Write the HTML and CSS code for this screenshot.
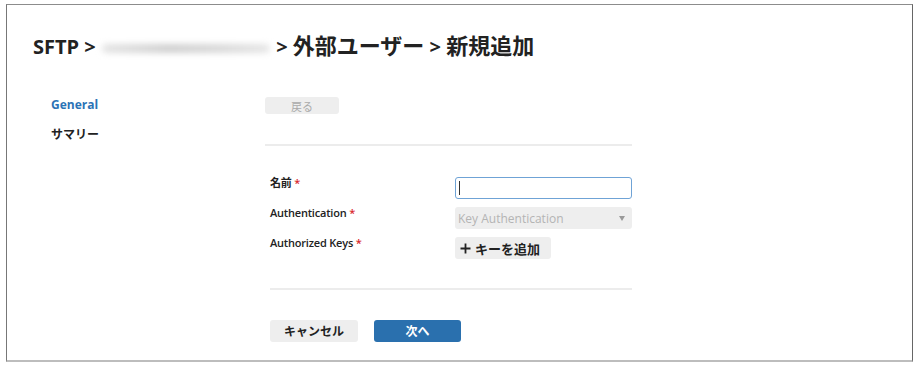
FILE: index.html
```html
<!DOCTYPE html>
<html lang="ja">
<head>
    <meta charset="UTF-8">
    <title>SFTP - 外部ユーザー - 新規追加</title>
    <link rel="stylesheet" href="styles.css">
</head>
<body>
    <div class="frame">
        <h1 class="page-title">SFTP &gt; <span class="blurred"></span> &gt; <span class="jp">外部ユーザー</span> &gt; <span class="jp">新規追加</span></h1>

        <div class="layout">
            <ul class="side-nav">
                <li class="nav-item active">General</li>
                <li class="nav-item">サマリー</li>
            </ul>

            <div class="main">
                <button class="btn btn-back" disabled>戻る</button>
                <div class="divider"></div>

                <div class="form">
                    <div class="form-row">
                        <label class="form-label">名前 <span class="req">*</span></label>
                        <div class="text-input"><span class="caret"></span></div>
                    </div>
                    <div class="form-row">
                        <label class="form-label">Authentication <span class="req">*</span></label>
                        <div class="select-input">
                            <span>Key Authentication</span>
                            <span class="arrow"></span>
                        </div>
                    </div>
                    <div class="form-row">
                        <label class="form-label">Authorized Keys <span class="req">*</span></label>
                        <div>
                            <button class="btn btn-add">
                                <svg width="11" height="11" viewBox="0 0 11 11">
                                    <path d="M5.5 0.5v10M0.5 5.5h10" stroke="#222" stroke-width="1.8" fill="none"/>
                                </svg>
                                キーを追加
                            </button>
                        </div>
                    </div>
                </div>

                <div class="divider divider-inset"></div>

                <div class="actions">
                    <button class="btn btn-cancel">キャンセル</button>
                    <button class="btn btn-primary">次へ</button>
                </div>
            </div>
        </div>
    </div>
</body>
</html>
```

FILE: styles.css
```css
:root {
    --blue: #2b73b6;
    --primary: #2a70ae;
    --gray-bg: #eeeeee;
    --text: #222222;
    --muted: #b4b4b4;
    --required: #d9262c;
}

* {
    margin: 0;
    padding: 0;
    box-sizing: border-box;
}

body {
    background-color: #fff;
    color: var(--text);
    font-family: 'Open Sans', 'Noto Sans CJK JP', sans-serif;
}

.frame {
    width: 907px;
    height: 358px;
    margin: 4px 0 0 6px;
    border: 1px solid #8c8c8c;
    border-left-color: #777;
    border-right-color: #666;
    border-bottom: 2px solid #bdbdbd;
    padding: 26px 0 0 26px;
}

.page-title {
    font-size: 20px;
    font-weight: 700;
    line-height: 28px;
    height: 28px;
    white-space: nowrap;
}

.page-title .jp {
    font-size: 22px;
}

.blurred {
    display: inline-block;
    vertical-align: middle;
    width: 168px;
    height: 9px;
    margin: 0 1px;
    border-radius: 5px;
    background: linear-gradient(90deg, #e4e4e4, #cfcfcf 40%, #d8d8d8 70%, #e6e6e6);
    filter: blur(3px);
}

.layout {
    display: flex;
    margin-top: 37px;
}

.side-nav {
    list-style: none;
    width: 232px;
    padding-left: 18px;
}

.nav-item {
    font-size: 12px;
    font-weight: 700;
    line-height: 17px;
    margin-bottom: 13px;
}

.nav-item.active {
    color: var(--blue);
}

.main {
    width: 367px;
}

.btn {
    border: none;
    border-radius: 3px;
    font-family: inherit;
    font-size: 12px;
    font-weight: 700;
    height: 22px;
    background-color: var(--gray-bg);
    color: var(--text);
    display: flex;
    align-items: center;
    justify-content: center;
}

.btn-back {
    width: 74px;
    height: 17px;
    margin-top: 1px;
    font-weight: 400;
    font-size: 11px;
    color: #aaa;
}

.divider {
    height: 2px;
    background-color: #ececec;
    margin-top: 30px;
}

.divider-inset {
    margin-left: 5px;
    margin-top: 29px;
}

.form {
    display: grid;
    gap: 8px;
    margin-top: 31px;
    padding-left: 5px;
}

.form-row {
    display: grid;
    grid-template-columns: 185px 177px;
}

.form-label {
    font-size: 11px;
    font-weight: 600;
    line-height: 12px;
    letter-spacing: -0.2px;
}

.req {
    color: var(--required);
}

.text-input {
    height: 22px;
    border: 1px solid #6fa3d6;
    border-radius: 3px;
    padding: 3px 3px;
}

.caret {
    display: block;
    width: 1px;
    height: 14px;
    background-color: #333;
}

.select-input {
    height: 22px;
    border-radius: 3px;
    background-color: var(--gray-bg);
    color: var(--muted);
    font-size: 12px;
    padding: 0 7px 0 3px;
    display: flex;
    align-items: center;
    justify-content: space-between;
}

.arrow {
    width: 0;
    height: 0;
    border-left: 3px solid transparent;
    border-right: 3px solid transparent;
    border-top: 5px solid #999;
}

.btn-add {
    width: 96px;
    gap: 4px;
    font-size: 13px;
    justify-content: flex-start;
    padding-left: 5px;
}

.actions {
    display: flex;
    gap: 16px;
    margin-top: 30px;
    padding-left: 5px;
}

.btn-cancel {
    width: 88px;
}

.btn-primary {
    width: 87px;
    background-color: var(--primary);
    color: #fff;
}
```
